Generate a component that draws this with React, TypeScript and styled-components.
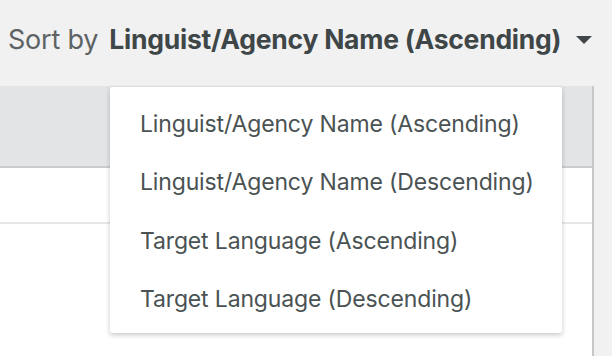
import styled, {createGlobalStyle} from "styled-components";

const GlobalStyle = createGlobalStyle`
    html, body {
        margin: 0;
        padding: 0;
        background: #f1f1f1;
        font-family: Inter, "Liberation Sans", sans-serif;
    }
`;

const options = [
    'Linguist/Agency Name (Ascending)',
    'Linguist/Agency Name (Descending)',
    'Target Language (Ascending)',
    'Target Language (Descending)',
];

/**
 * Sort toolbar with its open dropdown, above an empty results table.
 */
const App = () => {
    return <Page>
        <GlobalStyle />
        <Toolbar>
            <SortLabel>Sort by</SortLabel>
            <SelectButton>
                <SelectValue>{options[0]}</SelectValue>
                <Caret width="16" height="8" viewBox="0 0 16 8">
                    <path d="M0 0 H16 L8 8 Z" fill="#3e4647" />
                </Caret>
            </SelectButton>
            <Menu>
                {options.map(it => <MenuItem key={it}>{it}</MenuItem>)}
            </Menu>
        </Toolbar>
        <Table>
            <TableHeader />
            <TableRow />
        </Table>
    </Page>;
};

export default App;

const Page = styled.div`
    width: 612px;
    height: 356px;
    overflow: hidden;
    background: #f1f1f1;
`;

const Toolbar = styled.div`
    position: relative;
    height: 86px;
    box-sizing: border-box;
    padding: 0 0 8px 8px;
    display: flex;
    align-items: center;
    gap: 11px;
    white-space: nowrap;
`;

const SortLabel = styled.span`
    font-size: 27px;
    color: #5d6364;
    letter-spacing: -0.2px;
`;

const SelectButton = styled.div`
    display: flex;
    align-items: center;
    gap: 15px;
`;

const SelectValue = styled.span`
    font-size: 26.5px;
    font-weight: 700;
    color: #3e4647;
    letter-spacing: -0.25px;
`;

const Caret = styled.svg`
    display: block;
    margin-top: 2px;
`;

const Menu = styled.ul`
    position: absolute;
    top: calc(100% + 1px);
    left: 110px;
    width: 452px;
    margin: 0;
    padding: 8px 0 5px;
    list-style: none;
    background: #fff;
    border-radius: 2px;
    box-shadow: 0 2px 5px rgba(0, 0, 0, 0.22);
    z-index: 2;
`;

const MenuItem = styled.li`
    height: 58.3px;
    display: flex;
    align-items: center;
    padding-left: 30px;
    font-size: 23px;
    color: #4a5253;
    letter-spacing: -0.15px;
`;

const Table = styled.div`
    width: 594px;
    height: 270px;
    box-sizing: border-box;
    border-right: 2px solid #c6c8c9;
    background: #fff;
`;

const TableHeader = styled.div`
    height: 80px;
    background: #e3e4e5;
    border-bottom: 2px solid #cacccd;
`;

const TableRow = styled.div`
    height: 54px;
    border-bottom: 2px solid #e7e7e7;
`;
